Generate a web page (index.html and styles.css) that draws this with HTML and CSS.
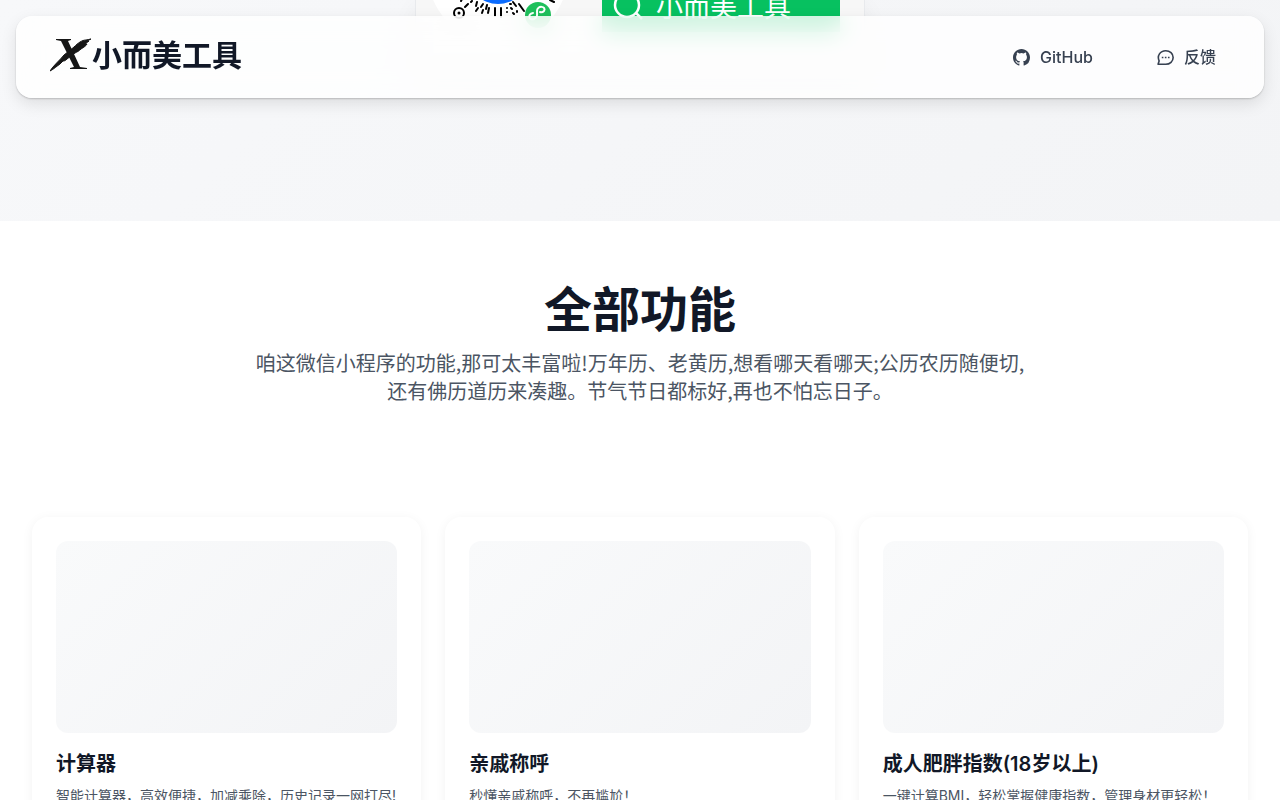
FILE: index.html
```html
<!DOCTYPE html>
<html lang="zh-CN">

<head>
    <meta charset="UTF-8">
    <meta name="viewport" content="width=device-width, initial-scale=1.0">
    <title>小而美工具</title>
    <link rel="stylesheet" href="styles.css">
</head>

<body>
    <header class="navbar">
        <a class="brand" href="#">
            <svg class="brand-icon" viewBox="0 0 42 34" aria-hidden="true">
                <path d="M6 1h15v1l-3 1 12 26 7 1v1H20v-1l4-1L11 3 6 2z" fill="#161616" />
                <path d="M41 1c-2 0-3 1-5 1-4 0-8 3-12 7L14 17C10 22 3 28 0 33c4-2 7-5 10-7l3-3c1 0 2 0 4-2l8-6c2-1 4-2 6-4 3-2 5-3 6-5h-2l4-3-2 0z" fill="#161616" stroke="#161616" />
            </svg>
            <span class="brand-name">小而美工具</span>
        </a>
        <nav class="nav-links">
            <a class="nav-link" href="#">
                <svg viewBox="0 0 16 16" aria-hidden="true">
                    <path fill="currentColor" d="M8 0C3.58 0 0 3.58 0 8c0 3.54 2.29 6.53 5.47 7.59.4.07.55-.17.55-.38 0-.19-.01-.82-.01-1.49-2.01.37-2.53-.49-2.69-.94-.09-.23-.48-.94-.82-1.13-.28-.15-.68-.52-.01-.53.63-.01 1.08.58 1.23.82.72 1.21 1.87.87 2.33.66.07-.52.28-.87.51-1.07-1.78-.2-3.64-.89-3.64-3.95 0-.87.31-1.59.82-2.15-.08-.2-.36-1.02.08-2.12 0 0 .67-.21 2.2.82a7.6 7.6 0 0 1 4 0c1.53-1.04 2.2-.82 2.2-.82.44 1.1.16 1.92.08 2.12.51.56.82 1.27.82 2.15 0 3.07-1.87 3.75-3.65 3.95.29.25.54.73.54 1.48 0 1.07-.01 1.93-.01 2.2 0 .21.15.46.55.38A8.01 8.01 0 0 0 16 8c0-4.42-3.58-8-8-8z" />
                </svg>
                <span>GitHub</span>
            </a>
            <a class="nav-link" href="#">
                <svg viewBox="0 0 16 16" fill="none" stroke="currentColor" stroke-width="1.5" aria-hidden="true">
                    <path d="M1 14.4l1-3.2C-.2 6.5 3 1.6 8.2 1.6c4 0 7 2.9 7 6.4s-3 6.4-7 6.4z" stroke-linejoin="round" />
                    <path d="M4.5 8H6M7.4 8h1.5M10.3 8h1.5" />
                </svg>
                <span>反馈</span>
            </a>
        </nav>
    </header>

    <main>
        <section class="hero">
            <div class="qr-card">
                <svg class="qr-banner" viewBox="0 0 448 72" role="img" aria-label="小而美工具 小程序码">
                    <!-- mini program code -->
                    <path d="M12-26a70 70 0 0 0 18 46h104a70 70 0 0 0 18-46z" fill="#fff" />
                    <circle cx="82" cy="-26" r="30" fill="#0b6cff" />
                    <g stroke="#000" stroke-width="2" stroke-linecap="round">
                        <path d="M46-1l-1 2M52 4l-3 3M56 1l-1 1M61 2l-1 4M67 4l-2 3M71 5l-1 4M62 8l-2 3M67 10l-1 3M73 8l-1 5M79 8v8M85 8v9M103 4l5 7M97 2l3 4M134 0l4 2" />
                        <path d="M91 8v0M91 12v0M95 8l1 1M97 13l1 1M101 11v1M94 4l1 0" />
                    </g>
                    <circle cx="43" cy="13" r="5" fill="#fff" stroke="#000" stroke-width="2" />
                    <circle cx="43" cy="13" r="1.5" />
                    <circle cx="122" cy="15" r="13" fill="#1fc05c" />
                    <path d="M117 13c-6 1-4 8 1 6 4-2 3-4 3-8 0-6 10-5 7 0-1 1-2 2-4 1" fill="none" stroke="#fff" stroke-width="2" stroke-linecap="round" />
                    <!-- search bar -->
                    <rect x="186" y="-30" width="238" height="62" fill="#07c160" />
                    <circle cx="211" cy="5" r="12" fill="none" stroke="#fff" stroke-width="2.5" />
                    <path d="M220 13l6 6" stroke="#fff" stroke-width="2.5" />
                    <text class="search-text" x="240" y="17">小而美工具</text>
                </svg>
            </div>
        </section>

        <section class="features">
            <div class="section-head">
                <h2>全部功能</h2>
                <p>咱这微信小程序的功能,那可太丰富啦!万年历、老黄历,想看哪天看哪天;公历农历随便切,还有佛历道历来凑趣。节气节日都标好,再也不怕忘日子。</p>
            </div>
            <div class="card-grid">
                <article class="card">
                    <div class="card-image"></div>
                    <h3>计算器</h3>
                    <p>智能计算器，高效便捷，加减乘除，历史记录一网打尽!</p>
                </article>
                <article class="card">
                    <div class="card-image"></div>
                    <h3>亲戚称呼</h3>
                    <p>秒懂亲戚称呼，不再尴尬！</p>
                </article>
                <article class="card">
                    <div class="card-image"></div>
                    <h3>成人肥胖指数(18岁以上)</h3>
                    <p>一键计算BMI，轻松掌握健康指数，管理身材更轻松！</p>
                </article>
            </div>
        </section>
    </main>
</body>

</html>
```
FILE: styles.css
```css
* {
    margin: 0;
    padding: 0;
    box-sizing: border-box;
}

body {
    font-family: Inter, "Noto Sans CJK SC", sans-serif;
    color: #111827;
    background: #fff;
}

a {
    color: inherit;
    text-decoration: none;
}

/* header */
.navbar {
    position: fixed;
    top: 16px;
    left: 16px;
    right: 16px;
    z-index: 10;
    display: flex;
    justify-content: space-between;
    align-items: center;
    padding: 16px 48px 16px 34px;
    border-radius: 16px;
    background: rgba(255, 255, 255, 0.8);
    backdrop-filter: blur(12px);
    box-shadow: 0 1px 2px rgba(0, 0, 0, 0.2), 0 6px 16px rgba(0, 0, 0, 0.1);
}

.brand {
    display: flex;
    align-items: center;
    height: 50px;
    padding-bottom: 4px;
}

.brand-icon {
    width: 42px;
    height: 34px;
}

.brand-name {
    font-size: 30px;
    font-weight: 600;
    line-height: 36px;
}

.nav-links {
    display: flex;
    gap: 64px;
}

.nav-link {
    display: flex;
    align-items: center;
    gap: 10px;
    font-size: 16px;
    font-weight: 500;
    line-height: 24px;
    color: #374151;
}

.nav-link svg {
    width: 17px;
    height: 17px;
}

/* hero */
.hero {
    display: flex;
    justify-content: center;
    align-items: flex-start;
    padding-bottom: 148px;
    background: linear-gradient(135deg, #f7f8fa, #f3f4f6);
}

.qr-card {
    width: 450px;
    border: 1px solid #e8eaed;
    border-top: 0;
    background: #f7f7f7;
    box-shadow: 0 8px 24px rgba(0, 0, 0, 0.06);
}

.qr-banner {
    display: block;
    width: 100%;
}

.search-text {
    font-size: 27px;
    fill: #fff;
}

/* features */
.features {
    padding: 64px 32px;
}

.section-head {
    max-width: 770px;
    margin: 0 auto 112px;
    text-align: center;
}

.section-head h2 {
    font-size: 48px;
    font-weight: 600;
    line-height: 50px;
    margin-bottom: 14px;
}

.section-head p {
    font-family: "Noto Sans CJK SC", sans-serif;
    font-size: 20px;
    line-height: 28px;
    color: #4b5563;
}

.card-grid {
    display: grid;
    grid-template-columns: repeat(3, 1fr);
    gap: 24px;
}

.card {
    padding: 24px;
    border-radius: 16px;
    background: #fff;
    box-shadow: 0 2px 12px rgba(0, 0, 0, 0.05);
}

.card-image {
    height: 192px;
    margin-bottom: 16px;
    border-radius: 12px;
    background: linear-gradient(135deg, #f9fafb, #f3f4f6);
}

.card h3 {
    font-size: 20px;
    font-weight: 600;
    line-height: 30px;
    margin-bottom: 8px;
}

.card p {
    font-size: 14px;
    line-height: 18px;
    color: #4b5563;
}
```
